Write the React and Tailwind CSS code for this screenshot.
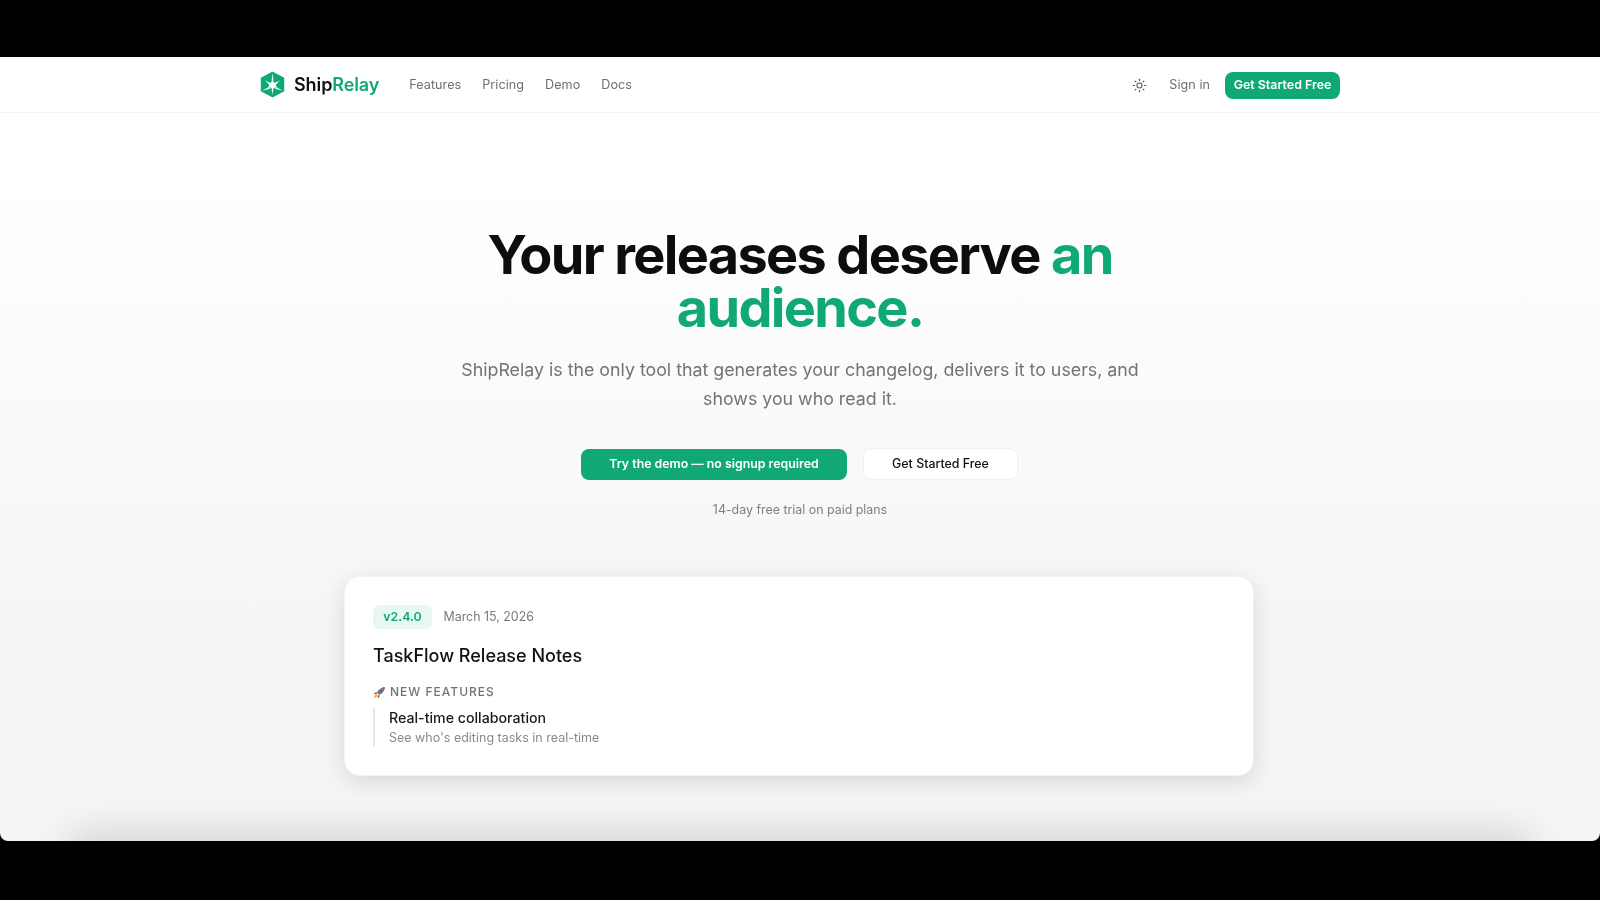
import { Sun } from "lucide-react";

function Logo() {
  return (
    <svg width="27" height="27" viewBox="0 0 26 26" aria-hidden="true" className="-ml-px">
      <path d="M13 1.5 L23.5 7 V19 L13 24.5 L2.5 19 V7 Z" fill="#10a877" stroke="#10a877" strokeWidth="1.6" strokeLinejoin="round" />
      <path d="M13 2 L13.9 9.5 L12.1 9.5 Z M3 19 L9.6 15.4 L10.6 17 Z M23 19 L16.4 15.4 L15.4 17 Z" fill="#ffffff" />
      <path d="M6 8.8 L10 11.2 L9.2 12.8 Z M20 8.8 L16 11.2 L16.8 12.8 Z M13 23 L12.2 17 L13.8 17 Z" fill="#ffffff" />
      <path d="M13 8.8 L14.6 11.2 L17.4 10.9 L16 13.6 L17.4 16.2 L14.6 15.9 L13 18.4 L11.4 15.9 L8.6 16.2 L10 13.6 L8.6 10.9 L11.4 11.2 Z" fill="#ffffff" />
    </svg>
  );
}

function Rocket() {
  return (
    <svg width="13" height="13" viewBox="0 0 14 14" aria-hidden="true">
      <path d="M4.2 7.2 C5.5 4 8.5 1.6 12.6 1.4 C12.4 5.5 10 8.5 6.8 9.8 Z" fill="#6f7a88" />
      <path d="M10 1.7 C11 1.4 11.8 1.4 12.6 1.4 C12.6 2.2 12.6 3 12.3 4 Z" fill="#d9342b" />
      <path d="M4.4 6.8 L2 7.2 L1 9 L3.9 8.6 Z M7.2 9.6 L6.8 12 L5 13 L5.4 10.1 Z" fill="#c9403a" />
      <path d="M3.8 9 C2.4 9.6 1.6 11 1.2 12.8 C3 12.4 4.4 11.6 5 10.2 Z" fill="#f0a020" />
      <circle cx="8.8" cy="5.2" r="1.1" fill="#3f6fa8" />
    </svg>
  );
}

export default function App() {
  return (
    <div className="h-[900px] bg-black pt-[57px] font-['Inter',sans-serif] overflow-hidden">
      <div className="relative h-[784px] overflow-hidden rounded-b-lg blur-[0.3px] bg-gradient-to-b from-white from-[15%] to-[#f5f5f5] to-[75%]">
        <header className="h-[56px] bg-white border-b border-[#f2f2f2]">
          <div className="w-[1080px] mx-auto h-full flex items-center justify-between">
            <div className="flex items-center">
              <div className="flex items-center gap-[8px]">
                <Logo />
                <span className="text-[18px] font-semibold tracking-[-0.1px] text-[#111111]">
                  Ship<span className="text-[#10a877]">Relay</span>
                </span>
              </div>
              <nav className="flex items-center gap-[21px] ml-[30px] pt-[1px] text-[12.6px] font-normal tracking-[0.05px] text-[#6f6f6f]">
                <span>Features</span>
                <span>Pricing</span>
                <span>Demo</span>
                <span>Docs</span>
              </nav>
            </div>
            <div className="flex items-center pt-[1px]">
              <Sun size={15} strokeWidth={1.75} className="text-[#555555]" />
              <span className="ml-[22px] text-[12.6px] font-normal tracking-[0.05px] text-[#6f6f6f]">Sign in</span>
              <button className="ml-[15px] h-[27px] w-[115px] rounded-lg bg-[#10a877] text-[12.4px] font-semibold text-white">Get Started Free</button>
            </div>
          </div>
        </header>

        <main className="flex flex-col items-center pt-[115px]">
          <h1 className="w-[700px] text-center text-[54px] leading-[53px] font-bold tracking-[-1.65px] text-[#0d0d0d]">
            Your releases deserve <span className="text-[#10a877]">an audience.</span>
          </h1>
          <p className="mt-[22px] w-[700px] text-center text-[17.8px] leading-[28.5px] text-[#737373]">
            ShipRelay is the only tool that generates your changelog, delivers it to users, and shows you who read it.
          </p>
          <div className="mt-[35px] mr-[1px] flex items-center gap-[16px]">
            <button className="h-[31px] w-[266px] rounded-lg bg-[#10a877] text-[12.35px] font-semibold text-white">Try the demo — no signup required</button>
            <button className="h-[32px] w-[155px] rounded-lg bg-white border border-[#f0f0f0] text-[12.4px] font-medium text-[#111111]">Get Started Free</button>
          </div>
          <p className="mt-[21px] text-[12.4px] leading-[18px] text-[#808080]">14-day free trial on paid plans</p>

          <section className="mt-[57px] mr-[2px] w-[910px] h-[200px] rounded-2xl bg-white border border-[#f3f3f3] shadow-[0_6px_22px_rgba(0,0,0,0.12)] p-[28px]">
            <div className="flex items-center gap-[11.5px]">
              <span className="h-[24px] w-[59px] flex items-center justify-center rounded-md bg-[#e7f7f1] text-[12.4px] font-semibold text-[#10a877]">v2.4.0</span>
              <span className="text-[12.4px] text-[#7a7a7a]">March 15, 2026</span>
            </div>
            <h2 className="mt-[14px] text-[18px] leading-[26px] font-medium text-[#111111]">TaskFlow Release Notes</h2>
            <div className="mt-[14px] flex items-center gap-[4px] text-[12px] leading-[18px] font-medium tracking-[1px] text-[#737373]">
              <Rocket />
              <span>NEW FEATURES</span>
            </div>
            <div className="mt-[7px] border-l-2 border-[#e8e8e8] pl-[14px] h-[39px]">
              <div className="text-[14.2px] leading-[20px] font-medium text-[#1a1a1a]">Real-time collaboration</div>
              <div className="text-[12.5px] leading-[19px] text-[#8a8a8a]">See who's editing tasks in real-time</div>
            </div>
          </section>
        </main>

        <div className="absolute left-[70px] right-[70px] bottom-[-24px] h-[24px] shadow-[0_-2px_38px_rgba(0,0,0,0.22)]" />
      </div>
    </div>
  );
}
